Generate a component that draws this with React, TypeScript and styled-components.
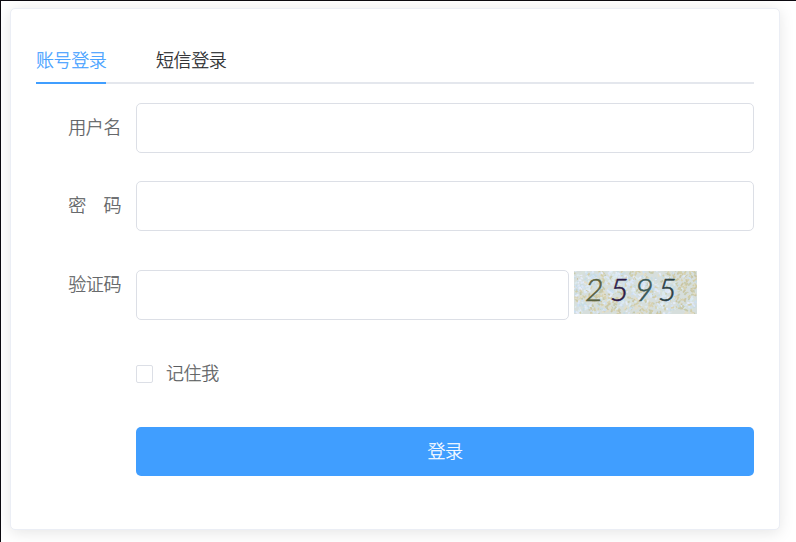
import React from "react";
import styled, { createGlobalStyle } from "styled-components";

const GlobalStyle = createGlobalStyle`
  * { box-sizing: border-box; }
  html, body, #root { height: 100%; margin: 0; }
  body {
    overflow: hidden;
    background: #fff;
    font-family: "Noto Sans CJK SC", sans-serif;
    font-weight: 300;
    font-size: 18px;
    letter-spacing: -0.4px;
    -webkit-text-stroke: 0.25px;
    color: #5a5c60;
  }
`;

const Page = styled.main`
  height: 542px;
  padding: 7px 16px 0 9px;
  border-top: 1px solid #0c0a10;
  border-left: 1px solid #0c0a10;
`;

const Card = styled.section`
  width: 770px;
  height: 522px;
  padding: 25px 25px 0;
  border: 1px solid #ebeef5;
  border-radius: 5px;
  background: #fff;
  box-shadow: 0 2.5px 15px rgba(0, 0, 0, 0.1);
`;

const Tabs = styled.nav`
  display: flex;
  gap: 50px;
  height: 50px;
  margin-bottom: 19px;
  box-shadow: inset 0 -2px #e4e7ed;
`;

const Tab = styled.button<{ $active?: boolean }>`
  width: 70px;
  padding: 2px 0 0;
  border: 0;
  border-bottom: 2px solid ${(p) => (p.$active ? "#409eff" : "transparent")};
  background: none;
  color: ${(p) => (p.$active ? "#409eff" : "#222427")};
  font: inherit;
  letter-spacing: inherit;
  line-height: 46px;
  white-space: nowrap;
`;

const Row = styled.div<{ $gap: number }>`
  display: grid;
  grid-template-columns: 100px 1fr;
  align-items: start;
  margin-bottom: ${(p) => p.$gap}px;
`;

const Label = styled.label<{ $lift?: number }>`
  padding-right: 15px;
  margin-top: ${(p) => -(p.$lift ?? 0)}px;
  line-height: 47px;
  text-align: right;
  white-space: pre;
`;

const Input = styled.input`
  width: 100%;
  height: 50px;
  padding: 0 18px;
  border: 1px solid #dcdfe6;
  border-radius: 5px;
  outline: none;
  background: #fff;
  color: #606266;
  font: inherit;
`;

const CodeLine = styled.div`
  display: grid;
  grid-template-columns: 433px 123px;
  column-gap: 5px;
`;

const CaptchaImage = styled.svg`
  display: block;
  width: 123px;
  height: 43px;
  margin-top: 1px;
  overflow: visible;
  letter-spacing: 0;
`;

const CaptchaDigit = styled.text`
  font-family: Lato, sans-serif;
  font-size: 32px;
  font-style: italic;
  font-weight: 300;
  -webkit-text-stroke: 0;
`;

const Remember = styled.label`
  display: flex;
  grid-column: 2;
  align-items: center;
  gap: 13px;
  height: 28px;
  line-height: 26px;
`;

const RememberText = styled.span`
  height: 28px;
`;

const Checkbox = styled.input`
  appearance: none;
  width: 17px;
  height: 18px;
  margin: 1px 0 0;
  border: 1px solid #dcdfe6;
  border-radius: 2px;
  background: #fff;
`;

const Submit = styled.button`
  grid-column: 2;
  height: 49px;
  padding: 0 0 3px;
  border: 0;
  border-radius: 5px;
  background: #409eff;
  color: #fff;
  font: inherit;
  letter-spacing: inherit;
`;

const digits = [
  { char: "2", x: 11, color: "#59613f" },
  { char: "5", x: 36, color: "#2c1a48" },
  { char: "9", x: 61, color: "#3c5a58" },
  { char: "5", x: 84, color: "#2b4044" },
];

const warm = ["#d2cea9", "#d8d2b2", "#c6caac", "#e2deca", "#cbc6a4", "#d6dedc"];
const cool = ["#dce7f8", "#cde0f2", "#e5ecfa", "#c8dce4", "#d8e2da", "#dbeaf0"];

/* Areas of the code image in which the pale blue ground shows through. */
const coolSpots = [
  { x: 12, y: 8, r: 13 },
  { x: 8, y: 38, r: 9 },
  { x: 44, y: 10, r: 14 },
  { x: 70, y: 17, r: 13 },
  { x: 90, y: 18, r: 13 },
  { x: 52, y: 34, r: 7 },
  { x: 92, y: 36, r: 8 },
  { x: 117, y: 33, r: 7 },
];

/* Seeded generator, so the background pattern is the same at every render. */
function makeSpecks(count: number) {
  let seed = 2595;
  const next = () => {
    seed = (seed * 16807) % 2147483647;
    return seed / 2147483647;
  };
  return Array.from({ length: count }, () => {
    const x = next() * 123;
    const y = next() * 43;
    const isCool = coolSpots.some((s) => Math.hypot(s.x - x, s.y - y) < s.r);
    const keepsTone = next() < 0.85;
    const palette = isCool === keepsTone ? cool : warm;
    return {
      x,
      y,
      dx: (next() - 0.5) * 7,
      dy: (next() - 0.5) * 7,
      color: palette[Math.floor(next() * palette.length)],
    };
  });
}

const specks = makeSpecks(1000);

function Captcha() {
  return (
    <CaptchaImage viewBox="0 0 123 43">
      <defs>
        <filter id="soft" x="0" y="0" width="1" height="1">
          <feGaussianBlur stdDeviation="0.6" />
        </filter>
        <clipPath id="frame">
          <rect width="123" height="43" />
        </clipPath>
      </defs>
      <rect width="123" height="43" fill="#d6dedc" />
      <g clipPath="url(#frame)">
        <g filter="url(#soft)">
          {specks.map((s, i) => (
            <path key={i} d={`M${s.x} ${s.y}l${s.dx} ${s.dy}`} stroke={s.color} strokeWidth="1.8" />
          ))}
        </g>
      </g>
      {digits.map((d) => (
        <CaptchaDigit key={d.x} x={d.x} y="30" fill={d.color} stroke={d.color} strokeWidth="0.5">
          {d.char}
        </CaptchaDigit>
      ))}
    </CaptchaImage>
  );
}

export default function App() {
  return (
    <>
      <GlobalStyle />
      <Page>
        <Card>
          <Tabs>
            <Tab $active>账号登录</Tab>
            <Tab>短信登录</Tab>
          </Tabs>
          <Row $gap={28}>
            <Label htmlFor="user">用户名</Label>
            <Input id="user" />
          </Row>
          <Row $gap={39}>
            <Label htmlFor="password">密　码</Label>
            <Input id="password" type="password" />
          </Row>
          <Row $gap={39}>
            <Label htmlFor="code" $lift={10}>验证码</Label>
            <CodeLine>
              <Input id="code" />
              <Captcha />
            </CodeLine>
          </Row>
          <Row $gap={40}>
            <Remember>
              <Checkbox type="checkbox" />
              <RememberText>记住我</RememberText>
            </Remember>
          </Row>
          <Row $gap={0}>
            <Submit>登录</Submit>
          </Row>
        </Card>
      </Page>
    </>
  );
}
